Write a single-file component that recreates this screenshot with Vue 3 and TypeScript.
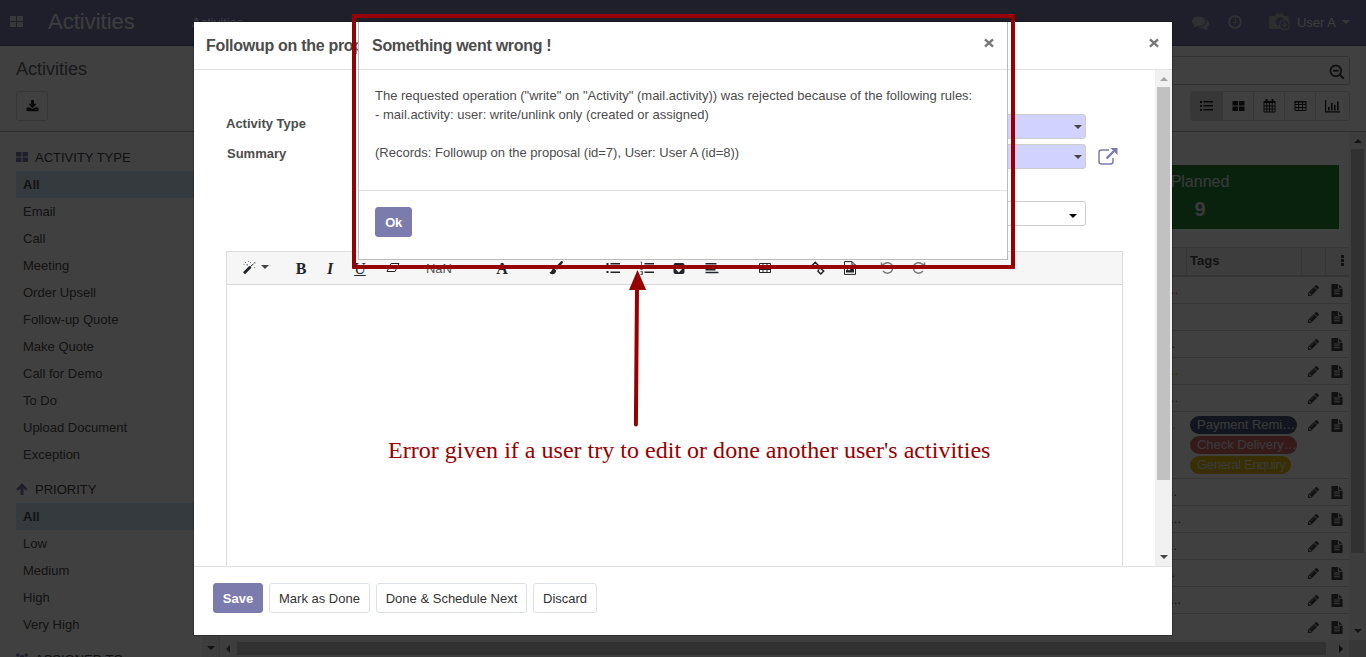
<script setup lang="ts">
interface SideSection { title: string; icon: string; items: string[] }
interface Row { dots: string; color: string; end: number; tags?: { text: string; cls: string }[] }
interface Tool { icon: string; gap: number; width: number }

const sections: SideSection[] = [
  {
    title: 'ACTIVITY TYPE',
    icon: 'grid',
    items: ['All', 'Email', 'Call', 'Meeting', 'Order Upsell', 'Follow-up Quote', 'Make Quote', 'Call for Demo', 'To Do', 'Upload Document', 'Exception'],
  },
  { title: 'PRIORITY', icon: 'arrow', items: ['All', 'Low', 'Medium', 'High', 'Very High'] },
  { title: 'ASSIGNED TO', icon: 'users', items: [] },
]

const rows: Row[] = [
  { dots: '...', color: '#dc3545', end: 8 },
  { dots: '', color: '#4c4c4c', end: 8 },
  { dots: '...', color: '#4c4c4c', end: 11 },
  { dots: '...', color: '#f0a020', end: 8 },
  { dots: '...', color: '#8a7a3a', end: 8 },
  {
    dots: '...', color: '#e08a20', end: 10,
    tags: [
      { text: 'Payment Remi…', cls: 'navy' },
      { text: 'Check Delivery…', cls: 'red' },
      { text: 'General Enquiry', cls: 'yellow' },
    ],
  },
  { dots: '...', color: '#4c4c4c', end: 9 },
  { dots: '...', color: '#4c4c4c', end: 5 },
  { dots: '...', color: '#4c4c4c', end: 9 },
  { dots: '...', color: '#008784', end: 11 },
  { dots: '...', color: '#4c4c4c', end: 5 },
  { dots: '', color: '#4c4c4c', end: 9 },
]

const tools: Tool[] = [
  { icon: 'magic', gap: 9, width: 26 },
  { icon: 'caret', gap: 0, width: 6 },
  { icon: 'bold', gap: 18, width: 30 },
  { icon: 'italic', gap: 0, width: 28 },
  { icon: 'underline', gap: 0, width: 32 },
  { icon: 'eraser', gap: 0, width: 34 },
  { icon: 'size', gap: 8, width: 42 },
  { icon: 'font', gap: 27, width: 30 },
  { icon: 'brush', gap: 24, width: 30 },
  { icon: 'ul', gap: 26, width: 32 },
  { icon: 'ol', gap: 2, width: 32 },
  { icon: 'check', gap: 0, width: 32 },
  { icon: 'align', gap: 1, width: 32 },
  { icon: 'table', gap: 22, width: 30 },
  { icon: 'link', gap: 22, width: 32 },
  { icon: 'image', gap: 0, width: 32 },
  { icon: 'undo', gap: 5, width: 32 },
  { icon: 'redo', gap: 0, width: 32 },
]

const views = ['list', 'kanban', 'calendar', 'pivot', 'graph']
</script>

<template>
  <div class="app">
    <header class="navbar">
      <svg class="apps" width="13" height="11" viewBox="0 0 13 11"><path d="M0 0h6v5H0zM7 0h6v5H7zM0 6h6v5H0zM7 6h6v5H7z" /></svg>
      <span class="brand">Activities</span>
      <span class="menu">Activities</span>
      <div class="systray">
        <svg class="chat" width="17" height="17" viewBox="0 0 1792 1792"><path d="M1408 768q0 139-94 257t-256.500 186.500-353.500 68.500q-86 0-176-16-124 88-278 128-36 9-86 16h-3q-11 0-20.500-8t-11.500-21q-1-3-1-6.500t.5-6.500 2-6l2.500-5 3.500-5.500 4-5 4.500-5 4-4.500q5-6 23-25t26-29.500 22.500-29 25-38.500 20.500-44q-124-72-195-177t-71-224q0-139 94-257t256.500-186.500 353.500-68.500 353.500 68.500 256.500 186.500 94 257zm384 256q0 120-71 224.500t-195 176.500q10 24 20.500 44t25 38.500 22.500 29 26 29.500 23 25q1 1 4 4.500t4.500 5 4 5 3.500 5.500l2.500 5 2 6 .5 6.500-1 6.500q-3 14-13 22t-22 7q-50-7-86-16-154-40-278-128-90 16-176 16-271 0-472-132 58 4 88 4 161 0 309-45t264-129q125-92 192-212t67-254q0-77-23-152 129 71 204 178t75 230z" /></svg>
        <svg class="clock" width="16" height="16" viewBox="0 0 1792 1792"><path d="M1024 544v448q0 14-9 23t-23 9h-320q-14 0-23-9t-9-23v-64q0-14 9-23t23-9h224v-352q0-14 9-23t23-9h64q14 0 23 9t9 23zm416 352q0-148-73-273t-198-198-273-73-273 73-198 198-73 273 73 273 198 198 273 73 273-73 198-198 73-273zm224 0q0 209-103 385.500t-279.500 279.500-385.500 103-385.500-103-279.500-279.500-103-385.500 103-385.500 279.500-279.500 385.500-103 385.500 103 279.500 279.500 103 385.500z" /></svg>
        <svg class="camera" width="22" height="18" viewBox="0 0 22 18">
          <path d="M2 3h4l1.500-2.500h6L15 3h3q2 0 2 2v9q0 2-2 2H2q-2 0-2-2V5q0-2 2-2z" />
          <circle class="lens" cx="11" cy="8.500" r="4.300" />
          <circle class="badge" cx="15.500" cy="12" r="5" />
          <path class="plus" d="M15.500 9.200v5.600M12.700 12h5.600" />
        </svg>
        <span class="user">User A</span>
        <i class="tri down light"></i>
      </div>
    </header>

    <section class="panel">
      <div class="panel-left">
        <span class="crumb">Activities</span>
        <button class="export">
          <svg width="13" height="13" viewBox="0 0 1792 1792"><path d="M1344 1344q0-26-19-45t-45-19-45 19-19 45 19 45 45 19 45-19 19-45zm256 0q0-26-19-45t-45-19-45 19-19 45 19 45 45 19 45-19 19-45zm128-224v320q0 40-28 68t-68 28h-1472q-40 0-68-28t-28-68v-320q0-40 28-68t68-28h465l135 136q58 56 136 56t136-56l136-136h464q40 0 68 28t28 68zm-325-569q17 41-14 70l-448 448q-18 19-45 19t-45-19l-448-448q-31-29-14-70 17-39 59-39h256v-448q0-26 19-45t45-19h256q26 0 45 19t19 45v448h256q42 0 59 39z" /></svg>
        </button>
      </div>
      <div class="panel-right">
        <div class="search">
          <svg width="16" height="16" viewBox="0 0 16 16"><circle cx="6.800" cy="6.800" r="5.400" /><path d="M4 6.800h5.600M10.800 10.800l4 4" /></svg>
        </div>
        <div class="views">
          <span v-for="v in views" :key="v" :class="['view', { on: v === 'list' }]">
            <svg width="15" height="14" viewBox="0 0 15 14">
              <path v-if="v === 'list'" d="M1 2h2v2H1zM4.500 2H14v1.500H4.500zM1 6h2v2H1zM4.500 6H14v1.500H4.500zM1 10h2v2H1zM4.500 10H14v1.500H4.500z" />
              <path v-else-if="v === 'kanban'" d="M1.500 2h5.500v4.500H1.500zM8 2h5.500v4.500H8zM1.500 7.500H7V12H1.500zM8 7.500h5.500V12H8z" />
              <g v-else-if="v === 'calendar'"><path d="M1.500 2h12v2h-12zM3.500 0h2v3h-2zM9.500 0h2v3h-2z" /><path class="ln" d="M2 4v9h11V4M2 7h11M2 10h11M4.800 4v9M7.500 4v9M10.200 4v9" /></g>
              <g v-else-if="v === 'pivot'"><path d="M1.500 2h12v1.500h-12z" /><path class="ln" d="M2 2.500v9h11v-9M2 5.500h11M2 8.500h11M5.500 3v9M9.500 3v9" /></g>
              <path v-else d="M0 1h1.200v11.300H15v1.200H0zM3 8h1.600v3.500H3zM6 4h1.600v7.500H6zM9 6h1.600v5.500H9zM12 2.500h1.600v9H12z" />
            </svg>
          </span>
        </div>
      </div>
    </section>

    <main class="main">
      <aside class="side">
        <nav v-for="s in sections" :key="s.title">
          <h4>
            <svg width="12" height="12" viewBox="0 0 12 12">
              <path v-if="s.icon === 'grid'" d="M0 1h5.500v4.500H0zM6.500 1H12v4.500H6.500zM0 6.500h5.500V11H0zM6.500 6.500H12V11H6.500z" />
              <path v-else-if="s.icon === 'arrow'" d="M6 .3l5.800 5.800-1.700 1.700-2.600-2.500V12h-3V5.300L1.900 7.800.2 6.100z" />
              <path v-else d="M0 2a1.800 1.800 0 013.600 0 1.800 1.800 0 01-3.600 0zM8.400 2a1.800 1.800 0 013.600 0 1.800 1.800 0 01-3.600 0zM3.600 4.500a2.400 2.400 0 014.800 0 2.400 2.400 0 01-4.800 0zM0 5h3v3H0zM9 5h3v3H9zM2 8h8v4H2z" />
            </svg>
            <span>{{ s.title }}</span>
          </h4>
          <div v-for="item in s.items" :key="item" :class="['side-item', { active: item === 'All' }]">{{ item }}</div>
        </nav>
      </aside>
      <div class="side-scroll"><i class="tri down"></i></div>
      <section class="content">
        <div class="viewport">
          <div class="list-area">
            <div class="card"><span class="card-label">Planned</span><b>9</b></div>
            <div class="table">
              <div class="tr head">
                <span class="c-sum"></span><span class="c-tags">Tags</span><span class="c-edit"></span>
                <span class="c-file"><i class="kebab"></i></span>
              </div>
              <div v-for="(r, i) in rows" :key="i" :class="['tr', { tall: r.tags }]">
                <span class="c-sum" :style="{ color: r.color, paddingRight: r.end + 'px' }">{{ r.dots }}</span>
                <span class="c-tags"><em v-for="t in r.tags" :key="t.text" :class="['tag', t.cls]">{{ t.text }}</em></span>
                <span class="c-edit"><svg width="13" height="13" viewBox="0 0 1792 1792"><path d="M491 1536l91-91-235-235-91 91v107h128v128h107zm523-928q0-22-22-22-10 0-17 7l-542 542q-7 7-7 17 0 22 22 22 10 0 17-7l542-542q7-7 7-17zm-54-192l416 416-832 832h-416v-416zm683 96q0 53-37 90l-166 166-416-416 166-165q36-38 90-38 53 0 91 38l235 234q37 39 37 91z" /></svg></span>
                <span class="c-file"><svg width="14" height="13" viewBox="0 0 1792 1792"><path d="M1596 476q14 14 28 36h-472v-472q22 14 36 28zm-476 164h544v1056q0 40-28 68t-68 28h-1344q-40 0-68-28t-28-68v-1600q0-40 28-68t68-28h800v544q0 40 28 68t68 28zm160 736v-64q0-14-9-23t-23-9h-704q-14 0-23 9t-9 23v64q0 14 9 23t23 9h704q14 0 23-9t9-23zm0-256v-64q0-14-9-23t-23-9h-704q-14 0-23 9t-9 23v64q0 14 9 23t23 9h704q14 0 23-9t9-23zm0-256v-64q0-14-9-23t-23-9h-704q-14 0-23 9t-9 23v64q0 14 9 23t23 9h704q14 0 23-9t9-23z" /></svg></span>
              </div>
            </div>
          </div>
          <div class="vbar"><i class="tri up"></i><div class="thumb"></div><i class="tri down"></i></div>
        </div>
        <div class="hbar"><i class="tri left"></i><div class="thumb"></div><i class="tri right"></i><div class="corner"></div></div>
      </section>
    </main>

    <div class="backdrop"></div>

    <div class="modal">
      <header class="modal-head">
        <span>Followup on the proposal</span>
        <svg class="close" width="10" height="10" viewBox="0 0 10 10"><path d="M1 1.300l8 7.400M9 1.300L1 8.700" /></svg>
      </header>
      <div class="modal-body">
        <div class="form">
          <div class="field"><label>Activity Type</label><div class="select req"><i class="tri down"></i></div></div>
          <div class="field">
            <label class="nudge">Summary</label><div class="select req"><i class="tri down"></i></div>
            <svg class="ext" width="20" height="17" viewBox="0 0 20 17"><path class="box" d="M11 2H3.500Q1 2 1 4.500v9Q1 16 3.500 16h9q2.500 0 2.500-2.500V10" /><path class="shaft" d="M8.500 10.500l7.500-7.500" /><path class="tip" d="M12.500 0h7v7z" /></svg>
          </div>
          <div class="field last"><label></label><div class="select"><i class="tri down"></i></div></div>
          <div class="editor">
            <div class="toolbar">
              <span v-for="t in tools" :key="t.icon" class="tool" :style="{ marginLeft: t.gap + 'px', width: t.width + 'px' }">
                <b v-if="t.icon === 'bold'" class="serif">B</b>
                <b v-else-if="t.icon === 'italic'" class="serif it">I</b>
                <span v-else-if="t.icon === 'underline'" class="serif un">U</span>
                <span v-else-if="t.icon === 'size'" class="nan">NaN</span>
                <b v-else-if="t.icon === 'font'" class="serif">A</b>
                <i v-else-if="t.icon === 'caret'" class="tri down big"></i>
                <svg v-else width="14" height="14" viewBox="0 0 14 14">
                  <g v-if="t.icon === 'magic'"><path class="w3" d="M2 12.200l6.500-6.500" /><path class="w1" d="M8.500 5.700L11.500 2.700" /><path class="soft" d="M12 1h1.500v1.500H12zM3 1h1v1H3zM6 0h1v1H6zM4.500 3h1.500v1.500H4.500zM8 1h1v1H8zM12 6h1v1h-1zM1.500 3h1v1h-1z" /></g>
                  <path v-else-if="t.icon === 'eraser'" class="w1" d="M5 2.500h8L9 10.500H1zM3.500 6.500H11" />
                  <path v-else-if="t.icon === 'brush'" d="M13.500.3q.8.800 0 2L8 8.800 5.800 6.800 11.800.6q1-.9 1.700-.3zM5 7.500l2.200 2q-.3 3.700-4 3.700Q1 13.200.3 11q1.300.5 1.900-.8Q3 7.600 5 7.500z" />
                  <path v-else-if="t.icon === 'ul'" d="M.5 2h2v2h-2zM4.500 2H14v1.600H4.500zM.5 6h2v2h-2zM4.500 6H14v2H4.500zM.5 10h2v2h-2zM4.500 10.400H14V12H4.500z" />
                  <g v-else-if="t.icon === 'ol'"><path d="M4.500 2H14v1.600H4.500zM4.500 6H14v2H4.500zM4.500 10.400H14V12H4.500z" /><path class="w1 thin" d="M.5 1h1v3M.5 6h2L.7 8.500h2M.5 10.500h2v3h-2M1 12h1.500" /></g>
                  <g v-else-if="t.icon === 'check'"><rect x="1.500" y="2" width="11" height="11" rx="2" /><path class="wh" d="M4 7l2.800 3L10.500 6" /></g>
                  <path v-else-if="t.icon === 'align'" d="M.5 2h11v1.600H.5zM.5 5h13v2H.5zM.5 8h10v1.500h-10zM.5 10.700h13v1.600H.5z" />
                  <path v-else-if="t.icon === 'table'" class="w1" d="M1.500 2.500h11v9h-11zM1.500 5.500h11M1.500 8.500h11M5 2.500v9M9 2.500v9" />
                  <path v-else-if="t.icon === 'link'" class="w15" d="M6.300 6.300L7.500 4.500 4.300 1.300 1.300 4.200l3 2.800 1.500-.4M7.800 7.800l1.700-.5 3.200 2.700-2.900 3L7 10.200l.6-1.700" />
                  <g v-else-if="t.icon === 'image'"><path class="w1" d="M1.500.6h7.500l3.500 3.500v9.300h-11zM9 .6v3.500h3.500" /><path d="M3 11.500V9.500l1.500-1.500 1.500 1.500L9 6.500l2 2v3z" /></g>
                  <path v-else-if="t.icon === 'undo'" class="w15 dim" d="M1.500 1.500v3.800h3.800M2 5Q4.500 1.300 8 1.700q4.700.8 4.700 5.300-.5 4.800-5.200 5.200Q4.700 12.200 3 10" />
                  <path v-else class="w15 dim" d="M12.500 1.500v3.800H8.700M12 5Q9.500 1.300 6 1.700 1.300 2.500 1.300 7q.5 4.800 5.200 5.200 2.800 0 4.500-2.200" />
                </svg>
              </span>
            </div>
          </div>
        </div>
        <div class="mbar"><i class="tri up grey"></i><div class="thumb"></div><i class="tri down"></i></div>
      </div>
      <footer class="modal-foot">
        <button class="btn primary">Save</button>
        <button class="btn mark">Mark as Done</button>
        <button class="btn next">Done &amp; Schedule Next</button>
        <button class="btn">Discard</button>
      </footer>
    </div>

    <div class="error">
      <header class="error-head">
        <span>Something went wrong !</span>
        <svg class="close" width="10" height="10" viewBox="0 0 10 10"><path d="M1 1.300l8 7.400M9 1.300L1 8.700" /></svg>
      </header>
      <div class="error-body">
        <p>The requested operation ("write" on "Activity" (mail.activity)) was rejected because of the following rules:</p>
        <p>- mail.activity: user: write/unlink only (created or assigned)</p>
        <p class="spaced">(Records: Followup on the proposal (id=7), User: User A (id=8))</p>
      </div>
      <footer class="error-foot"><button class="btn primary ok">Ok</button></footer>
    </div>

    <div class="frame"></div>
    <svg class="arrow" width="20" height="157" viewBox="0 0 20 157"><path class="stem" d="M9 18L7.900 154.500" /><path class="tip" d="M9.500 0L18.200 20H1z" /></svg>
    <div class="note">Error given if a user try to edit or done another user's activities</div>
  </div>
</template>

<style>
html, body { margin: 0; overflow: hidden; }
</style>

<style scoped>
* { box-sizing: border-box; }
.app { position: relative; width: 1366px; height: 657px; overflow: hidden; display: flex; flex-direction: column; background: #fff; color: #4c4c4c; font: 13px/19px "Liberation Sans", Arial, sans-serif; }
svg { display: block; flex: none; fill: currentColor; }
button { font: inherit; padding: 0; margin: 0; }

.tri { display: block; width: 0; height: 0; flex: none; border: 4px solid transparent; }
.tri.down { border-top-color: #444; border-bottom: 0; }
.tri.up { border-bottom-color: #505050; border-top: 0; }
.tri.left { border-right-color: #606060; border-left: 0; }
.tri.right { border-left-color: #333; border-right: 0; }
.tri.light { border-top-color: #ddd; }
.tri.grey { border-bottom-color: #a3a3a3; }

.navbar { height: 46px; flex: none; display: flex; align-items: center; background: #7c7bad; border-bottom: 1px solid #5f5e97; color: #fff; padding: 0 16px 1px 10px; }
.apps { fill: #e0e0e0; margin-top: -2px; }
.brand { margin-left: 25px; font-size: 22px; color: #f0f0f0; width: 144px; margin-top: -1px; }
.menu { color: #fff; }
.systray { margin-left: auto; display: flex; align-items: center; color: #ddd; }
.chat, .clock { fill: #c0bfd0; }
.clock { margin-left: 18px; }
.camera { margin-left: 26px; fill: #b5b5b5; }
.camera .lens { fill: #7c7bad; }
.camera .badge { fill: #7c7bad; stroke: #b5b5b5; stroke-width: 1.2; }
.camera .plus { stroke: #b5b5b5; stroke-width: 1.500; fill: none; }
.user { margin: 0 6px; color: #f0f0f0; }

.panel { height: 86px; flex: none; display: flex; justify-content: space-between; border-bottom: 1px solid #b8b8b8; padding: 0 16px; }
.panel-left { display: flex; flex-direction: column; align-items: flex-start; }
.crumb { font-size: 18px; line-height: 24px; margin-top: 11px; color: #666; }
.export { width: 32px; height: 30px; margin-top: 10px; background: #fff; border: 1px solid #d8d8d8; border-radius: 3px; display: flex; align-items: center; justify-content: center; color: #222; }
.panel-right { width: 600px; display: flex; flex-direction: column; align-items: flex-end; padding-top: 10px; }
.search { width: 600px; height: 29px; border: 1px solid #c4c4c4; border-radius: 3px; display: flex; align-items: center; justify-content: flex-end; padding: 2px 4px 0 0; }
.search svg { fill: none; stroke: #444; stroke-width: 2; }
.search path { stroke-width: 2; }
.views { margin-top: 6px; display: flex; height: 30px; border: 1px solid #dadada; border-radius: 3px; }
.view { width: 31px; border-right: 1px solid #dadada; display: flex; align-items: center; justify-content: center; color: #222; }
.view:first-child { width: 32px; }
.view:last-child { width: 33px; border-right: 0; }
.view.on { background: #dcdcdc; }
.ln { fill: none; stroke: #222; stroke-width: 1; }

.main { height: 525px; display: flex; }
.side { width: 202px; padding: 4px 0 0 16px; overflow: hidden; flex: none; }
h4 { margin: 0; height: 35px; display: flex; align-items: center; font-size: 13px; font-weight: 400; padding-top: 7px; color: #444; }
h4 svg { margin-right: 7px; color: #7c7bad; }
.side-item { height: 27px; line-height: 27px; padding-left: 7px; color: #4c4c4c; }
.side-item.active { background: #cfe5f2; font-weight: 700; }
.side-scroll { width: 18px; flex: none; background: #f1f1f1; border-right: 1px solid #ddd; display: flex; align-items: flex-end; justify-content: center; padding-bottom: 7px; }
.content { flex: 1; display: flex; flex-direction: column; }
.viewport { height: 508px; display: flex; }
.list-area { flex: 1; height: 508px; overflow: hidden; display: flex; flex-direction: column; align-items: flex-end; }
.card { width: 278px; height: 64px; margin: 33px 10px 18px 0; flex: none; background: #208637; color: #e6e6e6; text-align: center; }
.card-label { display: block; font-size: 16px; line-height: 22px; padding-top: 6px; }
.card b { display: block; font-size: 20px; line-height: 24px; margin-top: 4px; }
.table { width: 100%; }
.tr { display: flex; justify-content: flex-end; height: 27px; border-bottom: 1px solid #d6d6d6; padding-right: 2px; }
.tr.tall { height: 67px; }
.tr.head { height: 30px; background: #f3f3f3; border-top: 1px solid #d8d8d8; border-bottom: 2px solid #cfd4dc; font-weight: 700; }
.c-sum { width: 150px; text-align: right; line-height: 25px; }
.c-tags { width: 115px; padding: 4px 0 0 4px; }
.c-edit { width: 24px; padding: 7px 0 0 6px; color: #444; }
.c-file { width: 22px; padding: 7px 0 0 5px; color: #444; }
.head .c-tags { line-height: 18px; border-left: 1px solid #d8d8d8; padding-left: 3px; }
.head .c-edit, .head .c-file { border-left: 1px solid #d8d8d8; padding-top: 6px; }
.kebab { display: block; width: 3px; height: 3px; margin: 1px 0 0 10px; background: #444; box-shadow: 0 4px #444, 0 8px #444; }
.tag { display: block; height: 18px; line-height: 17px; border-radius: 9px; padding: 0 7px; margin-bottom: 2px; font-style: normal; white-space: nowrap; color: #e6e6e6; }
.navy { background: #475577; width: 107px; }
.red { background: #d86868; width: 107px; letter-spacing: -.05px; }
.yellow { background: #e0b800; width: 101px; letter-spacing: -.35px; }
.vbar { width: 17px; background: #f1f1f1; display: flex; flex-direction: column; align-items: center; padding: 7px 0; }
.vbar .thumb { width: 13px; height: 404px; margin-top: 6px; background: #c1c1c1; }
.vbar .tri.down { margin-top: auto; }
.hbar { height: 17px; display: flex; align-items: center; background: #f1f1f1; padding-left: 6px; }
.hbar .thumb { height: 13px; width: 1089px; margin-left: 7px; background: #c1c1c1; }
.hbar .right { margin-left: 13px; }
.corner { width: 17px; height: 17px; margin-left: auto; background: #dcdcdc; }

.backdrop { position: absolute; inset: 0; background: rgba(0, 0, 0, .75); }

.modal { position: absolute; left: 194px; top: 22px; width: 978px; height: 613px; background: #fff; display: flex; flex-direction: column; box-shadow: 0 0 0 1px rgba(0, 0, 0, .25); }
.modal-head, .error-head { height: 48px; flex: none; border-bottom: 1px solid #dee2e6; display: flex; justify-content: space-between; align-items: center; font-size: 16px; font-weight: 700; letter-spacing: -.29px; padding: 0 13px 1px 12px; }
.close { margin-top: -5px; }
.close path { fill: none; stroke: #777; stroke-width: 2.400; }
.modal-body { height: 496px; display: flex; overflow: hidden; }
.form { flex: 1; padding: 44px 32px 0; }
.field { display: flex; height: 25px; margin-bottom: 5px; }
.field label { width: 240px; font-weight: 700; line-height: 20px; }
.field .nudge { padding-left: 1px; }
.select { width: 620px; height: 25px; border: 1px solid #ccc; border-radius: 3px; display: flex; align-items: center; justify-content: flex-end; padding-right: 3px; }
.select.req { background: #d2d2ff; }
.field.last { margin: 32px 0 25px; }
.last .select { padding: 5px 8px 0 0; }
.last .tri { border-top-color: #000; }
.ext { margin: 4px 0 0 12px; }
.ext .box { fill: none; stroke: #7c7bad; stroke-width: 1.500; }
.ext .shaft { stroke: #7c7bad; stroke-width: 2.400; }
.ext .tip { fill: #7c7bad; }
.editor { height: 400px; width: 897px; border: 1px solid #dcdcdc; }
.toolbar { height: 33px; background: #f6f6f6; border-bottom: 1px solid #d8d8d8; display: flex; align-items: center; color: #212529; }
.tool { display: flex; justify-content: center; align-items: center; flex: none; }
.tool .big { margin-top: -2px; }
.serif { font: 700 16px/18px "Liberation Serif", serif; padding-top: 1px; }
.it { font-style: italic; }
.un { text-decoration: underline; font-weight: 400; }
.nan { color: #555; }
.soft { fill: #888; }
.w1, .w15, .w3, .wh { fill: none; stroke: #212529; stroke-width: 1; }
.w15 { stroke-width: 1.500; }
.w3 { stroke-width: 2.800; }
.wh { stroke: #f6f6f6; stroke-width: 2; }
.thin { stroke-width: .7; }
.dim { stroke: #777; }
.mbar { width: 17px; background: #f1f1f1; display: flex; flex-direction: column; align-items: center; padding: 7px 0; }
.mbar .thumb { width: 13px; height: 393px; margin-top: 6px; background: #c1c1c1; }
.mbar .down { margin-top: auto; }
.modal-foot { height: 69px; border-top: 1px solid #dee2e6; padding: 16px 0 0 19px; display: flex; gap: 6px; }
.btn { height: 30px; padding: 0 9px; background: #fff; border: 1px solid #dee2e6; border-radius: 3px; color: #333; white-space: nowrap; }
.btn.mark { width: 101px; padding: 0; }
.btn.next { width: 151px; padding: 0; }
.btn.primary { background: #7c7bad; border-color: #7c7bad; color: #fff; font-weight: 700; width: 50px; padding: 0; }
.btn.primary.ok { width: 37px; letter-spacing: -.3px; }

.error { position: absolute; left: 358px; top: 22px; width: 650px; height: 238px; background: #fff; border: 1px solid #bbb; border-top: 0; display: flex; flex-direction: column; }
.error-head { padding-left: 13px; }
.error-body { height: 120px; padding: 16px 16px 0; }
.error-body p { margin: 0; white-space: nowrap; }
.error-body .spaced { margin-top: 19px; }
.error-foot { border-top: 1px solid #dee2e6; padding: 16px 0 0 16px; flex: 1; }

.frame { position: absolute; left: 352px; top: 14px; width: 663px; height: 255px; border: 4px solid #960000; border-radius: 1px; }
.arrow { position: absolute; left: 628px; top: 270px; }
.stem { stroke: #960000; stroke-width: 4; stroke-linecap: round; }
.arrow .tip { fill: #960000; }
.note { position: absolute; left: 388px; top: 436px; font: 24px/28px "Liberation Serif", "Times New Roman", serif; letter-spacing: .015px; color: #960000; white-space: nowrap; }
</style>
